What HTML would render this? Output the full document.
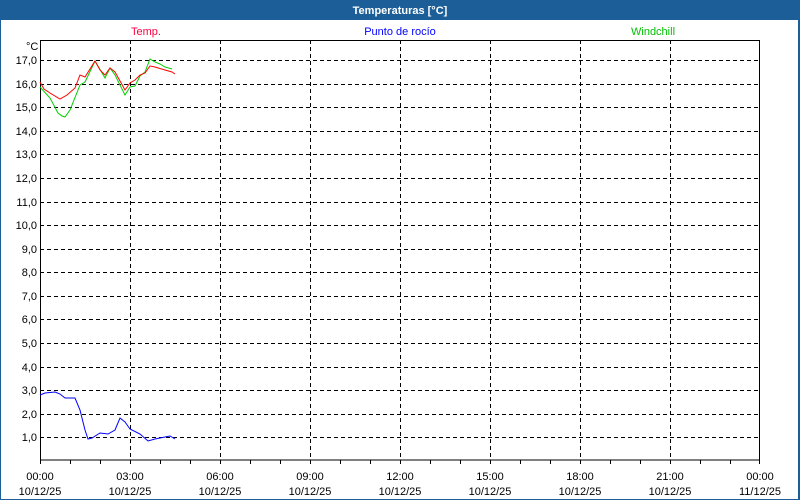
<!DOCTYPE html>
<html><head><meta charset="utf-8"><style>
body{margin:0;width:800px;height:500px;overflow:hidden;background:#fff}
svg{display:block}
text{font-family:"Liberation Sans",Tahoma,sans-serif;font-size:11px}
</style></head><body>
<svg width="800" height="500" viewBox="0 0 800 500">
<rect x="0" y="0" width="800" height="500" fill="#1c5f98"/>
<rect x="1" y="20" width="797" height="479" fill="#fff"/>
<text x="400" y="14" fill="#fff" text-anchor="middle" font-weight="bold" style="font-size:11px">Temperaturas [°C]</text>
<text x="131" y="35" fill="#ff0040">Temp.</text>
<text x="400" y="35" fill="#0000ff" text-anchor="middle">Punto de rocío</text>
<text x="631" y="35" fill="#00c000">Windchill</text>
<text x="26" y="50" fill="#000">°C</text>
<g stroke="#000" stroke-width="1" stroke-dasharray="4,3" shape-rendering="crispEdges">
<path d="M40 60.5H760M40 84.5H760M40 107.5H760M40 131.5H760M40 154.5H760M40 178.5H760M40 202.5H760M40 225.5H760M40 249.5H760M40 272.5H760M40 296.5H760M40 319.5H760M40 343.5H760M40 367.5H760M40 390.5H760M40 414.5H760M40 437.5H760"/>
<path d="M130.5 40V460M220.5 40V460M310.5 40V460M400.5 40V460M490.5 40V460M580.5 40V460M670.5 40V460"/>
</g>
<g stroke="#000" fill="none" shape-rendering="crispEdges">
<rect x="40.5" y="40.5" width="719" height="419.5"/>
<path d="M40.5 460v4M70.5 460v4M100.5 460v4M130.5 460v4M160.5 460v4M190.5 460v4M220.5 460v4M250.5 460v4M280.5 460v4M310.5 460v4M340.5 460v4M370.5 460v4M400.5 460v4M430.5 460v4M460.5 460v4M490.5 460v4M520.5 460v4M550.5 460v4M580.5 460v4M610.5 460v4M640.5 460v4M670.5 460v4M700.5 460v4M730.5 460v4M759.5 460v4"/>
</g>
<g text-anchor="end" fill="#000">
<text x="37" y="64">17,0</text><text x="37" y="88">16,0</text><text x="37" y="111">15,0</text><text x="37" y="135">14,0</text><text x="37" y="158">13,0</text><text x="37" y="182">12,0</text><text x="37" y="206">11,0</text><text x="37" y="229">10,0</text><text x="37" y="253">9,0</text><text x="37" y="276">8,0</text><text x="37" y="300">7,0</text><text x="37" y="323">6,0</text><text x="37" y="347">5,0</text><text x="37" y="371">4,0</text><text x="37" y="394">3,0</text><text x="37" y="418">2,0</text><text x="37" y="441">1,0</text>
</g>
<g text-anchor="middle" fill="#000">
<text x="40" y="480">00:00</text><text x="130" y="480">03:00</text><text x="220" y="480">06:00</text><text x="310" y="480">09:00</text><text x="400" y="480">12:00</text><text x="490" y="480">15:00</text><text x="580" y="480">18:00</text><text x="670" y="480">21:00</text><text x="760" y="480">00:00</text>
<text x="40" y="495">10/12/25</text><text x="130" y="495">10/12/25</text><text x="220" y="495">10/12/25</text><text x="310" y="495">10/12/25</text><text x="400" y="495">10/12/25</text><text x="490" y="495">10/12/25</text><text x="580" y="495">10/12/25</text><text x="670" y="495">10/12/25</text><text x="760" y="495">11/12/25</text>
</g>
<polyline fill="none" stroke="#00d000" points="40,87 50,98 58,113 62,116 65,117 70,110 80,85 85,82 95,61 105,78 110,68 115,75 125,95 130,87 135,86 140,76 145,72 150,59 155,62 160,64 165,67 172,69"/>
<polyline fill="none" stroke="#ff0000" points="40,82 44,89 50,93 60,99 67,95 75,88 80,75 85,77 95,61 100,70 105,75 110,68 115,72 125,90 130,83 135,80 140,75 145,73 150,66 155,67 165,70 172,72 175,74"/>
<polyline fill="none" stroke="#0000ff" points="40,395 45,393 55,392 60,394 65,398 75,398 80,410 85,430 88,439 92,438 100,433 108,434 115,430 120,418 125,422 130,429 140,434 148,441 155,439 165,437 170,436 175,439"/>
</svg>
</body></html>
